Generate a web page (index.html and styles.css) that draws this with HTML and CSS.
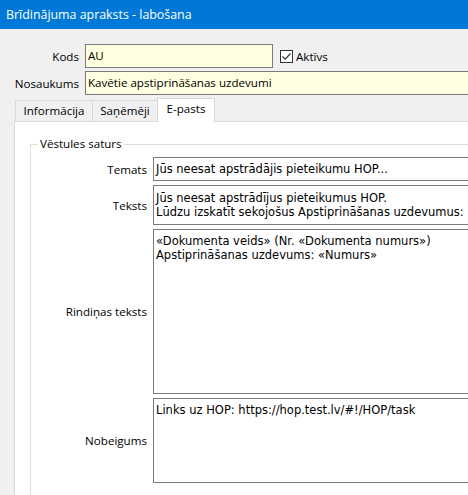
FILE: index.html
```html
<!DOCTYPE html>
<html>
<head>
<meta charset="utf-8">
<link rel="stylesheet" href="styles.css">
</head>
<body>
<div class="window">
  <div class="titlebar">Brīdinājuma apraksts - labošana</div>
  <div class="content">
    <div class="row row-kods">
      <span class="lbl">Kods</span>
      <div class="field yellow kods">AU</div>
      <span class="check"><svg width="11" height="11" viewBox="0 0 11 11"><path d="M1.5 5.5 L4.2 8.2 L9.5 2.5" fill="none" stroke="#333" stroke-width="1.2"/></svg></span>
      <span class="check-lbl">Aktīvs</span>
    </div>
    <div class="row row-nos">
      <span class="lbl">Nosaukums</span>
      <div class="field yellow wide">Kavētie apstiprināšanas uzdevumi</div>
    </div>
    <div class="tabs">
      <div class="tab t1">Informācija</div>
      <div class="tab t2">Saņēmēji</div>
      <div class="tab sel t3">E-pasts</div>
    </div>
    <div class="panel">
      <fieldset class="group">
        <legend>Vēstules saturs</legend>
        <div class="frow">
          <span class="flbl">Temats</span>
          <div class="box h-tem">Jūs neesat apstrādājis pieteikumu HOP...</div>
        </div>
        <div class="frow">
          <span class="flbl">Teksts</span>
          <div class="box h-tek">Jūs neesat apstrādījus pieteikumus HOP.<br>Lūdzu izskatīt sekojošus Apstiprināšanas uzdevumus:</div>
        </div>
        <div class="frow">
          <span class="flbl">Rindiņas teksts</span>
          <div class="box h-rin">«Dokumenta veids» (Nr. «Dokumenta numurs»)<br>Apstiprināšanas uzdevums: «Numurs»</div>
        </div>
        <div class="frow">
          <span class="flbl">Nobeigums</span>
          <div class="box h-nob">Links uz HOP: https://hop.test.lv/#!/HOP/task</div>
        </div>
      </fieldset>
    </div>
  </div>
</div>
</body>
</html>
```
FILE: styles.css
```css
html, body {
  margin: 0;
  padding: 0;
}
body {
  width: 468px;
  height: 495px;
  overflow: hidden;
  background: #f0f0f0;
  font-family: "Open Sans", "Noto Sans", sans-serif;
  font-size: 11.6px;
  color: #000;
}
.window {
  width: 468px;
  height: 495px;
  overflow: hidden;
}
.titlebar {
  height: 29px;
  background: #0078d7;
  color: #fff;
  line-height: 29px;
  padding-left: 6px;
  font-size: 12.4px;
  white-space: nowrap;
}
.content {
  display: flex;
  flex-direction: column;
}
.row {
  display: flex;
  align-items: center;
  height: 24px;
  white-space: nowrap;
}
.row-kods {
  margin-top: 15px;
}
.row-nos {
  margin-top: 3px;
}
.lbl {
  width: 79px;
  text-align: right;
  margin-right: 6px;
  flex: none;
}
.field {
  box-sizing: border-box;
  height: 24px;
  border: 1px solid #7a7a7a;
  padding-left: 2px;
  line-height: 22px;
  flex: none;
}
.yellow {
  background: #ffffe1;
}
.kods {
  width: 188px;
}
.wide {
  width: 420px;
}
.check {
  box-sizing: border-box;
  width: 13px;
  height: 13px;
  border: 1px solid #333;
  background: #fff;
  margin-left: 7px;
  display: flex;
  align-items: center;
  justify-content: center;
  flex: none;
}
.check-lbl {
  margin-left: 3px;
}
.tabs {
  display: flex;
  align-items: flex-end;
  height: 23px;
  margin-top: 3px;
  margin-left: 15px;
  position: relative;
  z-index: 1;
}
.tab {
  box-sizing: border-box;
  height: 21px;
  border: 1px solid #d9d9d9;
  border-bottom: none;
  background: #f0f0f0;
  line-height: 20px;
  text-align: center;
  white-space: nowrap;
  margin-right: -1px;
}
.t1 { width: 78px; }
.t2 { width: 66px; }
.t3 { width: 58px; }
.tab.sel {
  height: 24px;
  margin-bottom: -1px;
  background: #fff;
  line-height: 20px;
}
.panel {
  margin-left: 14px;
  background: #fff;
  border-left: 1px solid #d9d9d9;
  border-top: 1px solid #d9d9d9;
  height: 400px;
  padding-left: 15px;
  padding-top: 14px;
}
.group {
  margin: 0;
  padding: 0 0 12px 0;
  border: 1px solid #dcdcdc;
  border-right: none;
  width: 480px;
  min-width: 0;
  box-sizing: border-box;
}
.group legend {
  margin-left: 7px;
  padding: 0 2px;
  line-height: 16px;
}
.frow {
  display: flex;
  align-items: center;
  margin-top: 4px;
}
.frow:first-of-type {
  margin-top: 5px;
}
.flbl {
  width: 116px;
  text-align: right;
  margin-right: 6px;
  flex: none;
  white-space: nowrap;
}
.box {
  box-sizing: border-box;
  border: 1px solid #7a7a7a;
  background: #fff;
  width: 360px;
  flex: none;
  font-family: "DejaVu Sans", sans-serif;
  font-size: 11.5px;
  line-height: 14px;
  padding: 2px 2px;
  white-space: nowrap;
  align-self: flex-start;
}
.h-tem { height: 24px; padding-top: 4px; }
.h-tek { height: 40px; padding-top: 5px; }
.h-rin { height: 165px; padding-top: 4px; }
.h-nob { height: 85px; padding-top: 4px; }
```
